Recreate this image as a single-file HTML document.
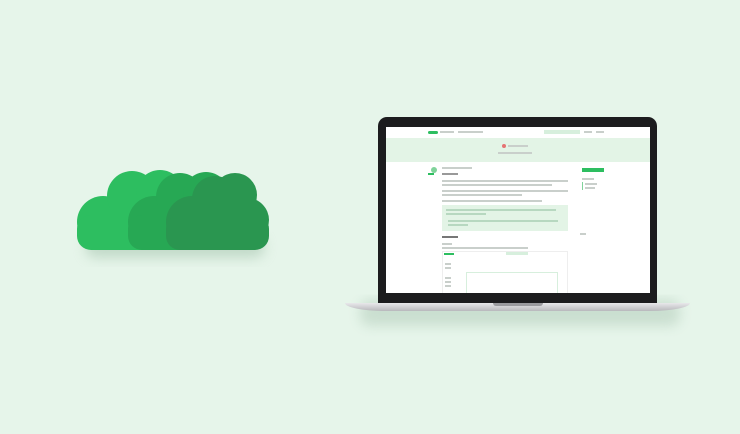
<!DOCTYPE html>
<html><head><style>
body{margin:0;width:740px;height:434px;background:#e6f5ea;position:relative;overflow:hidden;font-family:"Liberation Sans",sans-serif}
.a{position:absolute}
.l{position:absolute;height:1.5px;background:#c9cfcb}
</style></head><body>
<svg class="a" style="left:0;top:0" width="740" height="434">
<defs><filter id="s" x="-20%" y="-20%" width="140%" height="160%"><feGaussianBlur stdDeviation="6"/></filter></defs>
<rect x="85" y="236" width="180" height="22" rx="11" fill="#9fbfa8" opacity=".5" filter="url(#s)"/>
<g fill="#2dbe60"><circle cx="103" cy="222" r="26"/><circle cx="132" cy="196" r="25"/><circle cx="160" cy="194" r="24"/><rect x="77" y="215" width="135" height="35" rx="14"/><rect x="110" y="195" width="70" height="40"/></g>
<g fill="#27a854"><circle cx="154" cy="222" r="26"/><circle cx="180" cy="197" r="24"/><circle cx="206" cy="195" r="23"/><rect x="128" y="215" width="120" height="35" rx="14"/><rect x="160" y="196" width="60" height="40"/></g>
<g fill="#2a9650"><circle cx="192" cy="222" r="26"/><circle cx="215" cy="199" r="23"/><circle cx="235" cy="195" r="22"/><circle cx="247" cy="220" r="22"/><rect x="166" y="215" width="103" height="35" rx="14"/><rect x="200" y="196" width="45" height="40"/></g>
<rect x="360" y="300" width="320" height="26" rx="10" fill="#a9c4b1" opacity=".45" filter="url(#s)"/>
</svg>
<div class="a" style="left:378px;top:117px;width:279px;height:188px;background:#1c1c1e;border-radius:9px 9px 0 0"></div>
<div class="a" style="left:386px;top:127px;width:264px;height:166px;background:#fff;overflow:hidden">
 <div class="a" style="left:0;top:11px;width:264px;height:24px;background:#e3f4e6"></div>
 <div class="a" style="left:42px;top:4px;width:10px;height:3px;background:#2dbe60;border-radius:2px"></div>
 <div class="l" style="left:54px;top:4px;width:14px"></div>
 <div class="l" style="left:72px;top:4px;width:25px"></div>
 <div class="a" style="left:158px;top:3px;width:36px;height:4px;background:#d7efdd"></div>
 <div class="l" style="left:198px;top:4px;width:8px"></div><div class="l" style="left:210px;top:4px;width:8px"></div>
 <div class="a" style="left:116px;top:17px;width:4px;height:4px;border-radius:2px;background:#e57373"></div>
 <div class="l" style="left:122px;top:18px;width:20px"></div>
 <div class="l" style="left:112px;top:25px;width:34px"></div>
 <div class="a" style="left:45px;top:40px;width:6px;height:6px;border-radius:3px;background:#7fd39a"></div>
 <div class="a" style="left:42px;top:46px;width:6px;height:2px;background:#2dbe60"></div>
 <div class="l" style="left:56px;top:40px;width:30px"></div>
 <div class="l" style="left:56px;top:46px;width:16px;background:#999"></div>
 <div class="l" style="left:56px;top:53px;width:126px"></div><div class="l" style="left:56px;top:57px;width:110px"></div>
 <div class="l" style="left:56px;top:63px;width:126px"></div><div class="l" style="left:56px;top:67px;width:80px"></div>
 <div class="l" style="left:56px;top:73px;width:100px"></div>
 <div class="a" style="left:56px;top:78px;width:126px;height:26px;background:#e3f4e6"></div>
 <div class="l" style="left:60px;top:82px;width:110px;background:#b7d8c0"></div><div class="l" style="left:60px;top:86px;width:40px;background:#b7d8c0"></div>
 <div class="l" style="left:62px;top:93px;width:110px;background:#b7d8c0"></div><div class="l" style="left:62px;top:97px;width:20px;background:#b7d8c0"></div>
 <div class="l" style="left:56px;top:109px;width:16px;background:#777"></div>
 <div class="l" style="left:56px;top:116px;width:10px"></div><div class="l" style="left:56px;top:120px;width:86px"></div>
 <div class="a" style="left:56px;top:124px;width:124px;height:50px;border:1px solid #eee"></div>
 <div class="a" style="left:58px;top:126px;width:10px;height:2px;background:#2dbe60"></div>
 <div class="a" style="left:120px;top:125px;width:22px;height:3px;background:#d7efdd"></div>
 <div class="a" style="left:80px;top:145px;width:90px;height:30px;border:1px solid #d7efdd"></div>
 <div class="l" style="left:59px;top:136px;width:6px"></div><div class="l" style="left:59px;top:140px;width:6px"></div><div class="l" style="left:59px;top:150px;width:6px"></div><div class="l" style="left:59px;top:154px;width:6px"></div><div class="l" style="left:59px;top:158px;width:6px"></div>
 <div class="a" style="left:196px;top:41px;width:22px;height:4px;background:#2dbe60"></div>
 <div class="l" style="left:196px;top:51px;width:12px"></div>
 <div class="a" style="left:196px;top:55px;width:1px;height:8px;background:#7fd39a"></div>
 <div class="l" style="left:199px;top:56px;width:12px"></div><div class="l" style="left:199px;top:60px;width:10px"></div>
 <div class="l" style="left:194px;top:106px;width:6px"></div>
</div>
<div class="a" style="left:345px;top:303px;width:345px;height:8px;background:linear-gradient(#e8e8ea,#b8b8bc);border-radius:0 0 40px 40px/0 0 8px 8px"></div>
<div class="a" style="left:493px;top:303px;width:50px;height:3px;background:#9a9a9e;border-radius:0 0 3px 3px"></div>
</body></html>
